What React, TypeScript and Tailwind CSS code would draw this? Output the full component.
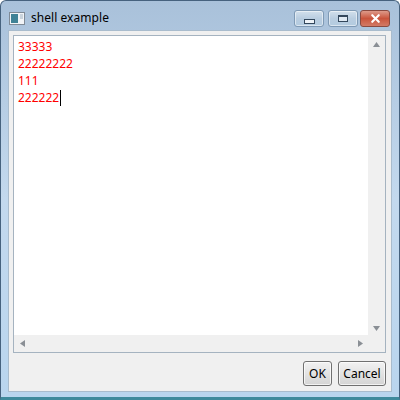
import { X } from 'lucide-react';

const ScrollArrow = ({ points }: { points: string }) => (
  <svg width="9" height="9" viewBox="0 0 9 9">
    <polygon points={points} fill="#8a8f95" />
  </svg>
);

const captionBtn =
  'flex items-center justify-center w-[30px] h-[17px] border border-[#7f9ab5] rounded-[3px] bg-gradient-to-b from-[#d3e0ec] via-[#b9cde0] to-[#b3cbe0] shadow-[inset_0_0_0_1px_rgba(255,255,255,0.5)]';

export default function App() {
  return (
    <div className="w-[400px] h-[400px] flex flex-col overflow-hidden rounded-t-[6px] border border-[#46627e] border-b-[3px] border-b-[#3f8a9c] bg-gradient-to-b from-[#a9c1da] via-[#c3d9ee] to-[#b9d5ee] px-[7px] pb-[5px] font-['Noto_Sans','Open_Sans',sans-serif]">
      <div className="h-[29px] shrink-0 flex justify-between">
        <div className="flex items-center gap-[6px] pl-[1px] pt-[5px]">
          <svg width="16" height="13" viewBox="0 0 16 13">
            <rect x="0.5" y="0.5" width="15" height="12" fill="#f1f4f7" stroke="#7f8a96" />
            <rect x="2" y="2" width="7" height="9" fill="#3f8296" />
            <rect x="11" y="2" width="3" height="5" fill="#c9d3dc" />
          </svg>
          <span className="text-[12px] leading-none tracking-[0.05px] text-black">shell example</span>
        </div>
        <div className="flex items-start mr-[2px] mt-[9px]">
          <div className={`${captionBtn} mr-[4px]`}>
            <div className="w-[11px] h-[5px] mt-[6px] border border-[#33475c] bg-[#eef3f8]" />
          </div>
          <div className={`${captionBtn} mr-[2px]`}>
            <div className="w-[10px] h-[7px] border border-[#33475c] border-t-2 bg-[#dfe9f3]" />
          </div>
          <div className="flex items-center justify-center w-[30px] h-[17px] border border-[#8a4a40] rounded-[3px] bg-gradient-to-b from-[#dd9a8a] via-[#c9543c] to-[#d27a66]">
            <X size={13} strokeWidth={4} className="text-white" />
          </div>
        </div>
      </div>

      <div className="flex-1 min-h-0 flex flex-col bg-[#f0f0f0] border border-[#a9bccd] pl-[4px] pr-[5px] pt-[4px] pb-[5px]">
        <div className="h-[318px] shrink-0 flex flex-col border border-[#a5b3c0] bg-white">
          <div className="flex-1 min-h-0 flex">
            <div className="flex-1 pl-[4px] pt-[2px] text-[12px] leading-[17px] text-[#ff0000]">
              <div>33333</div>
              <div>22222222</div>
              <div>111</div>
              <div className="flex items-center">
                222222
                <span className="w-px h-[16px] bg-black ml-[1px]" />
              </div>
            </div>
            <div className="w-[17px] flex flex-col items-center justify-between bg-[#f0f0f0] pt-[4px] pb-[2px]">
              <ScrollArrow points="4.5,2 8,7 1,7" />
              <ScrollArrow points="1,2 8,2 4.5,7" />
            </div>
          </div>
          <div className="h-[17px] shrink-0 flex items-center justify-between bg-[#f0f0f0] pl-[4px] pr-[20px]">
            <ScrollArrow points="2,4.5 7,1 7,8" />
            <ScrollArrow points="2,1 7,4.5 2,8" />
          </div>
        </div>
        <div className="flex-1 flex items-end justify-end gap-[6px]">
          <button className="w-[29px] h-[25px] border border-[#707070] rounded-[3px] bg-gradient-to-b from-[#f2f2f2] to-[#d4d4d4] shadow-[inset_0_0_0_1px_rgba(255,255,255,0.7)] text-[12px] text-black">
            OK
          </button>
          <button className="w-[48px] h-[25px] border border-[#707070] rounded-[3px] bg-gradient-to-b from-[#f2f2f2] to-[#d4d4d4] shadow-[inset_0_0_0_1px_rgba(255,255,255,0.7)] text-[12px] text-black">
            Cancel
          </button>
        </div>
      </div>
    </div>
  );
}
